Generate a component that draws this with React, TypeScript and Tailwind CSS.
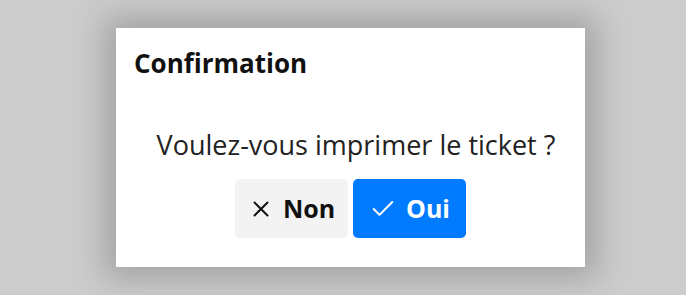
import { X, Check } from "lucide-react";

export default function App() {
  return (
    <div className="w-[686px] h-[295px] bg-[#cccccc] flex items-center justify-center overflow-hidden" style={{ fontFamily: '"Open Sans", "Noto Sans", sans-serif' }}>
      {/* dialog */}
      <div className="ml-[15px] w-[469px] h-[239px] bg-white flex flex-col shadow-[0_0_30px_12px_rgba(0,0,0,0.2)]">
        <div className="px-[18px] pt-[17px] text-[26px] font-bold text-[#111] leading-[36px]">Confirmation</div>

        <div className="flex-1 flex flex-col items-center pt-[46px]">
          <p className="pl-[11px] text-[27px] text-[#222] leading-[36px]">Voulez-vous imprimer le ticket ?</p>

          <div className="flex gap-[5px] mt-[16px]">
            {/* Non */}
            <button className="w-[113px] h-[59px] rounded-[5px] bg-[#f3f3f3] text-[#111] flex items-center justify-center gap-[9px] text-[25px] font-bold">
              <X size={26} strokeWidth={1.8} />
              Non
            </button>
            {/* Oui */}
            <button className="w-[113px] h-[59px] rounded-[5px] bg-[#007bff] text-white flex items-center justify-center gap-[9px] text-[25px] font-bold">
              <Check size={28} strokeWidth={1.7} />
              Oui
            </button>
          </div>
        </div>
      </div>
    </div>
  );
}
